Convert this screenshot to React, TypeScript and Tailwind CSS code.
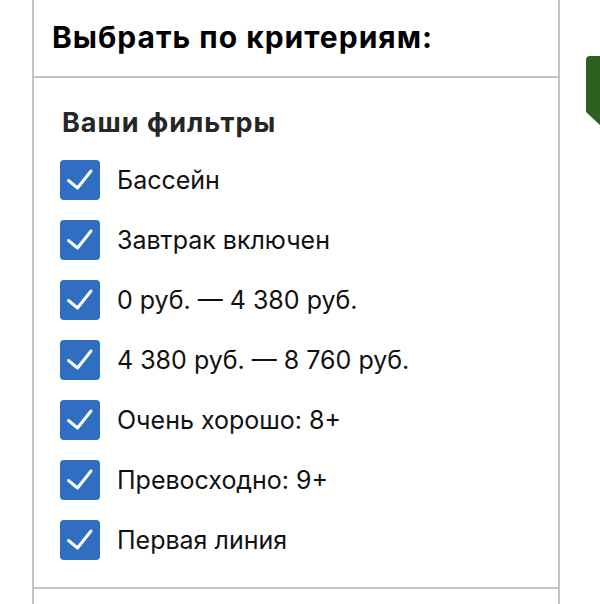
const filters = [
  "Бассейн",
  "Завтрак включен",
  "0 руб. — 4 380 руб.",
  "4 380 руб. — 8 760 руб.",
  "Очень хорошо: 8+",
  "Превосходно: 9+",
  "Первая линия",
];

function CheckBox() {
  return (
    <span className="flex h-10 w-10 shrink-0 items-center justify-center rounded-[4px] bg-[#2f6ec0]">
      <svg width="40" height="40" viewBox="0 0 40 40" fill="none">
        <path
          d="M8.5 20.5L17.5 28L31 11"
          stroke="white"
          strokeWidth="3"
          strokeLinecap="round"
          strokeLinejoin="round"
        />
      </svg>
    </span>
  );
}

export default function App() {
  return (
    <div
      className="relative h-[604px] w-[600px] overflow-hidden bg-white"
      style={{ fontFamily: "Inter, 'Noto Sans', Arial, sans-serif" }}
    >
      {/* green tab at the right edge */}
      <svg
        className="absolute left-[586px] top-[56px]"
        width="14"
        height="70"
        viewBox="0 0 14 70"
      >
        <path d="M4 0H14V69L0 56V4Q0 0 4 0Z" fill="#2b6020" />
      </svg>

      <div className="ml-[32px] flex h-full w-[528px] flex-col border-x-2 border-[#c3c3c3]">
        <div className="h-[78px] border-b-2 border-[#c3c3c3] pl-[18px] pt-[18px]">
          <h2 className="text-[30px] font-bold leading-[38px] tracking-[1px] text-black">
            Выбрать по критериям:
          </h2>
        </div>

        <div className="border-b-2 border-[#c3c3c3] pb-[27px] pl-[26px] pt-[28px]">
          <h3 className="mb-[20px] ml-[2px] text-[27px] font-bold leading-[34px] tracking-[1px] text-[#262626]">
            Ваши фильтры
          </h3>
          <ul className="flex flex-col gap-[20px]">
            {filters.map((f) => (
              <li key={f} className="flex items-center gap-[17px]">
                <CheckBox />
                <span className="text-[25px] leading-[30px] text-[#111]">
                  {f}
                </span>
              </li>
            ))}
          </ul>
        </div>
      </div>
    </div>
  );
}
